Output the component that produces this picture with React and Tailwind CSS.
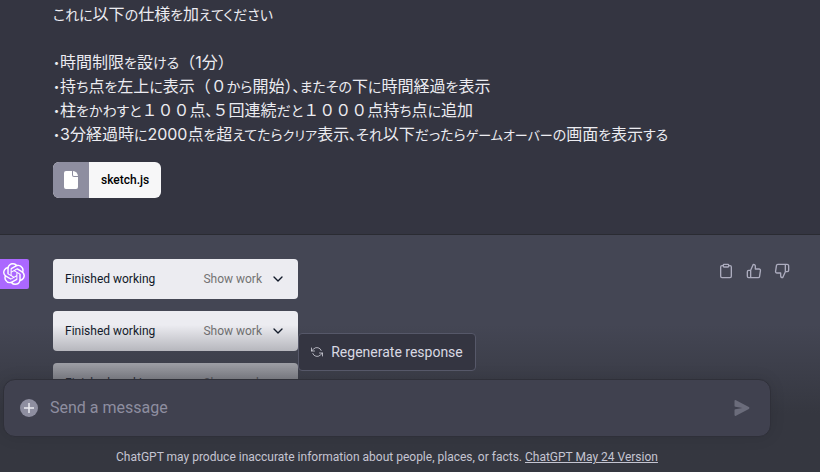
import React, { useState } from 'react';
import { FiChevronDown, FiClipboard, FiRefreshCcw, FiThumbsDown, FiThumbsUp } from 'react-icons/fi';
import { SiOpenai } from 'react-icons/si';

const lines = [
  '・時間制限を設ける（1分）',
  '・持ち点を左上に表示（０から開始）、またその下に時間経過を表示',
  '・柱をかわすと１００点、５回連続だと１０００点持ち点に追加',
  '・3分経過時に2000点を超えてたらクリア表示、それ以下だったらゲームオーバーの画面を表示する',
];

// Kana are set smaller and proportionally, kanji and digits keep their full width
const kanaClass = (part) => {
  if (/^[ァ-ヺー]/.test(part)) return "text-[13px] leading-4 [font-feature-settings:'palt']";
  if (/^[ぁ-ゟ、・]/.test(part)) return "text-[14px] leading-4 [font-feature-settings:'palt']";
  return '';
};

const JapaneseLine = ({ text }) => (
  <p>
    {text.split(/([ぁ-ゟ、・]+|[ァ-ヺー]+)/).map((part, i) => (
      <span key={i} className={kanaClass(part)}>{part}</span>
    ))}
  </p>
);

const FileChip = ({ name }) => (
  <a href="#file" className="mt-4 flex h-9 w-fit overflow-hidden rounded-md bg-[#f7f7f8] font-['Roboto',sans-serif] text-xs font-medium text-black">
    <span className="flex w-9 items-center justify-center bg-[#8e8ea0] text-white">
      <svg viewBox="0 0 14 18" className="h-[18px] w-[14px]" fill="currentColor">
        <path d="M2 0h6v4a2 2 0 0 0 2 2h4v10a2 2 0 0 1-2 2H2a2 2 0 0 1-2-2V2a2 2 0 0 1 2-2Z" />
        <path d="M9 0a6 6 0 0 1 5 5h-4a1 1 0 0 1-1-1Z" />
      </svg>
    </span>
    <span className="flex items-center px-3">{name}</span>
  </a>
);

const WorkCard = () => (
  <button type="button" className="flex h-10 w-[245px] items-center rounded bg-[#ececf1] px-3 text-xs text-gray-900">
    <span>Finished working</span>
    <span className="ml-auto text-neutral-500">Show work</span>
    <FiChevronDown className="ml-2 h-4 w-4" />
  </button>
);

const IconButton = ({ label, children }) => (
  <button type="button" aria-label={label} className="p-1">{children}</button>
);

export default function App() {
  const [message, setMessage] = useState('');

  return (
    <div className="relative flex h-screen flex-col overflow-hidden bg-[#343541] font-['Roboto','Noto_Sans_CJK_JP',sans-serif]">
      <div className="border-b border-[#2a2b32] pt-0.5 pr-12 pb-9 pl-[53px] font-['Inter','Noto_Sans_CJK_JP',sans-serif] text-base leading-6 text-[#ececf1]">
        <JapaneseLine text="これに以下の仕様を加えてください" />
        <p>&nbsp;</p>
        {lines.map((line) => <JapaneseLine key={line} text={line} />)}
        <FileChip name="sketch.js" />
      </div>

      <div className="flex flex-1 items-start overflow-hidden bg-[#444654] pt-6 pr-[26px]">
        <div className="flex h-[30px] w-[29px] shrink-0 items-center justify-center rounded-r-xs bg-[#ab68ff] pr-0.5 text-white">
          <SiOpenai className="h-[22px] w-[22px]" />
        </div>
        <div className="ml-6 flex flex-col gap-3">
          <WorkCard />
          <WorkCard />
          <WorkCard />
        </div>
        <div className="ml-auto flex gap-1 text-[#acacbe]">
          <IconButton label="Copy"><FiClipboard className="h-4 w-4" /></IconButton>
          <IconButton label="Good response"><FiThumbsUp className="h-4 w-4" /></IconButton>
          <IconButton label="Bad response"><FiThumbsDown className="h-4 w-4" /></IconButton>
        </div>
      </div>

      <div className="absolute inset-x-0 bottom-0 bg-linear-to-b from-[#353740]/0 to-[#353740] to-60% pt-2 pr-[49px] pb-[7px] pl-[3px]">
        <div className="flex justify-center">
          <button type="button" className="flex h-[38px] items-center gap-2 rounded border border-[#565869] bg-[#343541] px-3 text-sm text-[#d9d9e3]">
            <FiRefreshCcw className="h-3 w-3" strokeWidth={1.5} />
            Regenerate response
          </button>
        </div>
        <form
          className="mt-2 flex h-[58px] items-center rounded-xl border border-[#2f3039] bg-[#40414f] px-4 shadow-[0_0_15px_rgba(0,0,0,0.1)]"
          onSubmit={(e) => e.preventDefault()}
        >
          <button type="button" aria-label="Attach file" className="text-[#40414f]">
            <svg viewBox="0 0 18 18" className="h-[18px] w-[18px]">
              <circle cx="9" cy="9" r="9" fill="#8e8ea0" />
              <path d="M9 4v10M4 9h10" stroke="#ececf1" strokeWidth="1.500" />
            </svg>
          </button>
          <input
            aria-label="Message"
            placeholder="Send a message"
            value={message}
            onChange={(e) => setMessage(e.target.value)}
            className="ml-3 min-w-0 flex-1 bg-transparent text-base text-white outline-none placeholder:text-[#8e8ea0]"
          />
          <button type="submit" aria-label="Send" className="mr-1 text-[#6b6c7b]">
            <svg viewBox="0 0 16 16" className="h-4 w-4" fill="currentColor">
              <path d="M.5 1.163A1 1 0 0 1 1.970.280l12.868 6.837a1 1 0 0 1 0 1.766L1.969 15.720A1 1 0 0 1 .5 14.836V10.330a1 1 0 0 1 .816-.983L8.500 8 1.316 6.653A1 1 0 0 1 .5 5.670V1.163Z" />
            </svg>
          </button>
        </form>
        <p className="mt-3 text-center text-xs text-[#c5c5d2]">
          ChatGPT may produce inaccurate information about people, places, or facts.{' '}
          <a href="#release-notes" className="underline">ChatGPT May 24 Version</a>
        </p>
      </div>
    </div>
  );
}
